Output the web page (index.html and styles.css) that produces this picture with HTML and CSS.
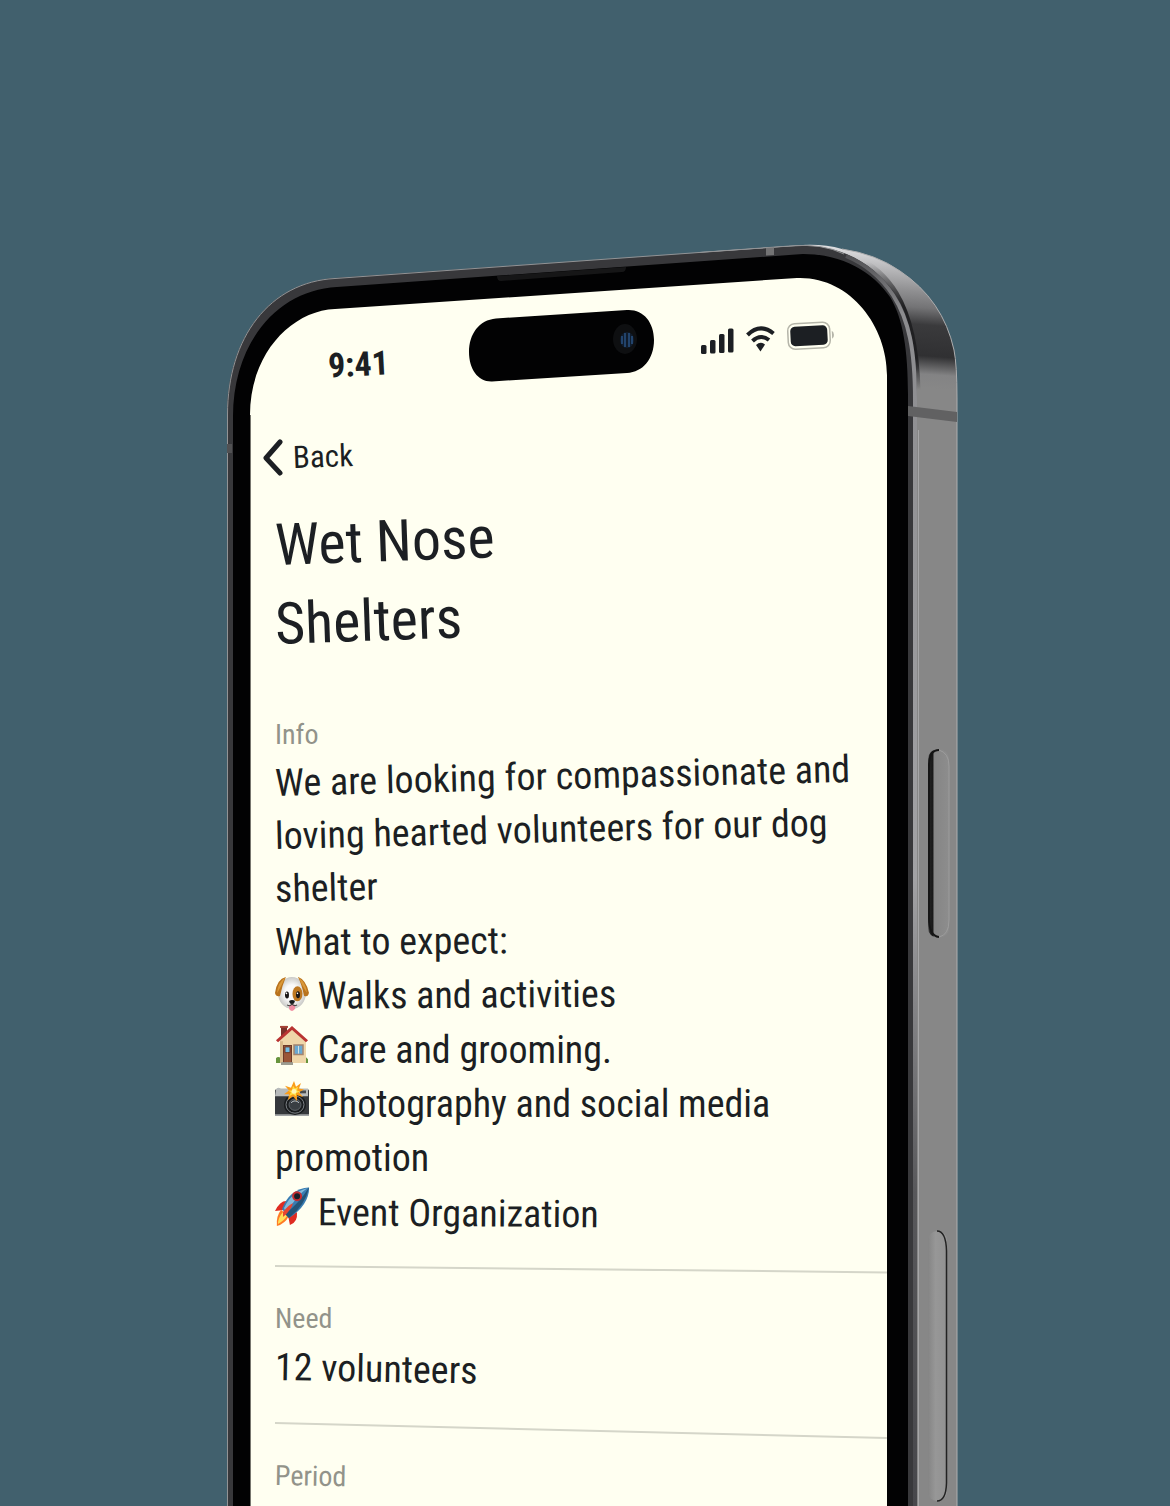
FILE: index.html
```html
<!DOCTYPE html>
<html lang="en">
<head>
<meta charset="utf-8">
<meta name="viewport" content="width=device-width, initial-scale=1">
<title>Wet Nose Shelters</title>
<link rel="stylesheet" href="styles.css">
</head>
<body>
<main class="phone">
  <svg class="frame" viewBox="227 240 731 1266" aria-hidden="true">
    <defs>
      <linearGradient id="side" gradientUnits="userSpaceOnUse" x1="890" y1="245" x2="880" y2="385">
        <stop offset="0" stop-color="#ececee"/><stop offset=".12" stop-color="#c6c6c8"/>
        <stop offset=".32" stop-color="#8e8e90"/><stop offset=".43" stop-color="#737375"/>
        <stop offset=".55" stop-color="#3a3a3c"/><stop offset=".77" stop-color="#303032"/>
        <stop offset=".9" stop-color="#838384"/><stop offset="1" stop-color="#878787"/>
      </linearGradient>
      <linearGradient id="lip" gradientUnits="userSpaceOnUse" x1="0" y1="250" x2="0" y2="1506">
        <stop offset="0" stop-color="#4b4b4e"/><stop offset=".05" stop-color="#8c8c8f"/>
        <stop offset=".5" stop-color="#a2a2a5"/><stop offset=".75" stop-color="#58585b"/><stop offset="1" stop-color="#47474b"/>
      </linearGradient>
      <linearGradient id="shade" gradientUnits="userSpaceOnUse" x1="0" y1="262" x2="0" y2="390">
        <stop offset="0" stop-color="#202022" stop-opacity="0"/><stop offset=".35" stop-color="#202022"/>
        <stop offset=".75" stop-color="#202022"/><stop offset="1" stop-color="#202022" stop-opacity="0"/>
      </linearGradient>
      <linearGradient id="keyEdge" x1="0" y1="0" x2="1" y2="0">
        <stop offset="0" stop-color="#606060"/><stop offset=".1" stop-color="#202020"/><stop offset=".22" stop-color="#191919"/>
        <stop offset=".3" stop-color="#858585"/><stop offset="1" stop-color="#8d8d8d"/>
      </linearGradient>
      <linearGradient id="keyFace" x1="0" y1="0" x2="1" y2="0">
        <stop offset="0" stop-color="#858585"/><stop offset=".4" stop-color="#979797"/><stop offset="1" stop-color="#919191"/>
      </linearGradient>
    </defs>
    <path fill="url(#side)" d="M700 252L803 245Q824 244 842 249Q876 254 900 271Q943 300 954 350Q957 365 957 398V1506H700Z"/>
    <path fill="none" stroke="#adadae" d="M842 249Q876 254 900 271Q943 300 954 350Q957 365 957 398V1506"/>
    <path fill="none" stroke="url(#shade)" stroke-width="5" d="M850 254C874 264 888 280 896 293C911 318 917 350 918 390"/>
    <path fill="#38383b" d="M227 1506V415C227 337 270 282 335 278L803 245.500C848 246 876 268 894 292C911 318 917 350 917 400V1506Z"/>
    <path fill="none" stroke="#929395" d="M227.500 1506V415C227.500 337 270 282 335 278.500L790 246Q822 243 844 254"/>
    <path fill="none" stroke="url(#lip)" stroke-width="4" d="M846 256C870 266 883 280 893 295C909 320 915 350 915 400V1506"/>
    <path fill="none" stroke="#a6a6a8" d="M918.500 430V1506"/>
    <path fill="#020203" d="M233 1506V417C233 342 278 290 337 287L803 254C843 254 873 272 890 297C903 318 908 350 908 395V1506Z"/>
    <path fill="#fffff1" d="M250 1506V415C250 354 291 311 335 309L797 278C850 276 887 326 887 375V1506Z"/>
    <path fill="none" stroke="#77766f" d="M250.500 1506V415"/>
    <path fill="#161617" d="M497 276L626 267Q626 272 622 272L501 281Q497 281 497 276Z"/>
    <path fill="#737374" d="M766 248L774 247.500V255L766 255.500Z"/>
    <path fill="#616162" d="M908 406L957 412V422L908 416Z"/>
    <path fill="#515153" d="M227 444H232V453H227Z"/>
    <path fill="#020203" d="M496 318.500L627 310C643 309 654 322 654 340C654 359 643 372 627 373L492 381.500C478 382 469 369 469 352C469 334 479 320 496 318.500Z"/>
    <ellipse cx="625" cy="339" rx="12" ry="15" fill="#0e0f11"/>
    <ellipse cx="627" cy="340" rx="7" ry="8" fill="#101c2c"/>
    <path stroke="#285080" stroke-width="1.500" fill="none" d="M622 336V344M625 333V347M629 333V347M632 336V344"/>
    <rect x="928" y="749" width="21" height="189" rx="10" fill="url(#keyEdge)"/>
    <path fill="none" stroke="#151515" stroke-width="2" d="M939 750Q929 750 929 766V918Q929 936 939 937"/>
    <path fill="none" stroke="#9d9d9d" d="M939 750Q949 753 949 766V920Q949 935 939 937"/>
    <rect x="928" y="1231" width="19" height="270" rx="9" fill="url(#keyFace)"/>
    <path fill="none" stroke="#222" stroke-width="1.500" d="M937 1231Q946 1231 946.500 1251V1483Q946 1501 937 1501"/>
  </svg>

  <div class="screen">
    <header class="status">
      <span class="time">9:41</span>
      <svg class="indicators" viewBox="700 318 136 40" role="img" aria-label="Signal, Wi-Fi and battery">
        <g fill="#1c1f23">
          <rect x="701" y="345" width="5.500" height="9" rx="1.500"/>
          <rect x="710" y="340" width="5.500" height="13.500" rx="1.500"/>
          <rect x="719" y="334" width="5.500" height="19" rx="1.500"/>
          <rect x="728" y="328.500" width="5.500" height="24" rx="1.500"/>
          <path d="M756 345Q760.500 341 765 344.500L760.500 351.500Z"/>
        </g>
        <g fill="none" stroke="#1c1f23" stroke-width="4">
          <path d="M747.500 335Q760 322.500 773.500 333.500"/><path d="M752.500 341Q760.500 333.500 769 340"/>
        </g>
        <g transform="rotate(-3 809 336)">
          <rect x="788" y="323" width="42" height="25.500" rx="7" fill="none" stroke="#b5b5a9" stroke-width="1.500"/>
          <rect x="790.500" y="326" width="37" height="19.500" rx="4.500" fill="#1c1f23"/>
          <path fill="#b5b5a9" d="M832 332Q834 333 834 336Q834 339 832 340Z"/>
        </g>
      </svg>
    </header>

    <nav class="nav">
      <a class="back" href="#">
        <svg class="chevron" viewBox="0 0 20 38" aria-hidden="true"><path d="M17 4L3 20L17 35" fill="none" stroke="#1c1f23" stroke-width="5" stroke-linecap="round" stroke-linejoin="round"/></svg>
        <span class="back-label">Back</span>
      </a>
    </nav>

    <h1 class="title"><span class="line tilt-up-2">Wet Nose</span><span class="line tilt-up-2">Shelters</span></h1>

    <section class="section info">
      <h2 class="label">Info</h2>
      <p class="copy"><span class="line tilt-up-1">We are looking for compassionate and</span><span class="line tilt-up-1">loving hearted volunteers for our dog</span><span class="line tilt-up-1">shelter</span></p>
      <p class="copy tilt-up">What to expect:</p>
      <ul class="list">
        <li class="item tilt-up">
          <svg class="emoji emoji-low" viewBox="0 0 34 36" role="img" aria-label="Dog">
            <defs><radialGradient id="fur"><stop offset=".5" stop-color="#fafafa"/><stop offset="1" stop-color="#c9c9c6"/></radialGradient></defs>
            <ellipse cx="17" cy="17" rx="14" ry="16" fill="url(#fur)"/>
            <path fill="#b9731d" d="M11 1Q2 3 0 17Q1 21 5 20Q7 10 11 1ZM23 1Q31 4 34 17Q33 22 29 20Q27 9 23 1Z"/>
            <path fill="#da9838" d="M10 2Q3 6 2 17Q5 13 10 2ZM24 2Q31 7 32 17Q28 12 24 2Z"/>
            <ellipse cx="22.500" cy="18" rx="5" ry="7.500" fill="#bd7822"/>
            <ellipse cx="12" cy="19" rx="2" ry="3.500" fill="#191615"/><ellipse cx="23" cy="19" rx="2" ry="3.500" fill="#191615"/>
            <circle cx="11.500" cy="17.500" r=".8" fill="#fff"/><circle cx="22.500" cy="17.500" r=".8" fill="#fff"/>
            <path fill="#f18ca1" d="M14 29H20V33Q17 37 14 33Z"/>
            <path fill="#17191a" d="M14 25Q17 23 20 25Q20 27 17 29Q14 27 14 25Z"/>
            <path fill="none" stroke="#43423f" d="M12 29Q15 31 17 28Q19 31 22 29"/>
          </svg>
          <span>Walks and activities</span>
        </li>
        <li class="item">
          <svg class="emoji emoji-tall" viewBox="0 0 34 42" preserveAspectRatio="none" role="img" aria-label="House">
            <path fill="#67943c" d="M1 40V35Q3 32 6 35V40ZM27 40V35Q30 32 33 36V40Z"/>
            <path fill="#7b302a" d="M6 1H12V16H6Z"/><path fill="#a74437" d="M5 1H13V3H5Z"/>
            <path fill="#efd6a9" d="M5 15L17 4L31 16V40H5Z"/><path fill="#d8b98a" d="M5 17H8V40H5Z"/>
            <path fill="none" stroke="#b93432" stroke-width="3" d="M2 17L17 3L32 17"/>
            <path fill="#6d3a29" d="M8 21H17V40H8Z"/><path fill="#9a5537" d="M9 22H16V39H9Z"/>
            <path fill="#71bde5" stroke="#6d3a29" d="M10 23H15V29H10Z"/>
            <path fill="#6aa9d2" stroke="#a38470" stroke-width="1.500" d="M19 21H28V31H19Z"/>
            <path stroke="#d4e2e4" d="M23.500 22V30"/><path fill="#9c9c91" d="M6 39H18V42H6Z"/>
          </svg>
          <span>Care and grooming.</span>
        </li>
        <li class="item">
          <svg class="emoji" viewBox="0 0 34 38" preserveAspectRatio="none" role="img" aria-label="Camera with flash">
            <rect x="0" y="9" width="34" height="28" rx="1" fill="#35383b"/>
            <path fill="#b8bbbb" d="M1 9Q2 6 6 8H33V16H0Z"/><path fill="#484b4d" d="M25 10H31V13H25Z"/><path fill="#a0a3a4" d="M0 35H34V37H0Z"/>
            <circle cx="20" cy="25" r="11" fill="#191c1e"/><circle cx="20" cy="25" r="9" fill="none" stroke="#808488"/>
            <circle cx="20" cy="25" r="6" fill="#393e43" stroke="#60656a"/><path fill="none" stroke="#bac0c3" d="M16 23Q20 19 24 23"/>
            <path fill="#fa9d19" d="M19 0L21 6L26 2L24 8L29 9L24 12L28 17L22 15L22 21L18 16L13 20L14 14L9 14L14 10L10 5L16 7Z"/>
            <path fill="#ffdf45" d="M18 5L20 8L23 6L22 10L25 11L21 13L21 16L18 14L14 16L16 12L13 10L17 10Z"/><circle cx="19" cy="11" r="2.500" fill="#fff5b7"/>
          </svg>
          <span>Photography and social media promotion</span>
        </li>
        <li class="item tilt-down">
          <svg class="emoji emoji-tall" viewBox="0 0 34 40" role="img" aria-label="Rocket">
            <path fill="#df2c22" d="M11 14Q5 14 0 24L9 23ZM22 25Q23 35 15 38L13 28Z"/>
            <path fill="#ff7b25" d="M6 23Q1 29 2 39Q10 37 14 29Z"/><path fill="#ffe05a" d="M8 25Q3 31 3 37Q9 34 12 29Z"/>
            <path fill="#397cb1" d="M7 22Q14 2 34 0Q34 18 14 31Z"/><path fill="#83b9db" d="M9 21Q16 5 32 1Q22 8 11 26Z"/>
            <path fill="#235377" d="M14 31Q30 18 34 0Q24 16 10 27Z"/><circle cx="22" cy="9" r="5" fill="#c32c30"/><circle cx="22" cy="9" r="3" fill="#171d28"/>
            <path fill="#e94430" d="M8 25Q14 17 18 16Q16 23 8 30Z"/>
          </svg>
          <span>Event Organization</span>
        </li>
      </ul>
    </section>

    <hr class="rule rule-near">
    <section class="section">
      <h2 class="label">Need</h2>
      <p class="copy tilt-down-1">12 volunteers</p>
    </section>
    <hr class="rule rule-far">
    <section class="section">
      <h2 class="label tilt-down-1">Period</h2>
    </section>
  </div>
</main>
</body>
</html>
```
FILE: styles.css
```css
* { box-sizing: border-box; }

body {
  min-height: 100vh;
  margin: 0;
  padding: 240px 0 0 15px;
  background: #41606d;
  color: #1c1f23;
  font-family: "Roboto Condensed", Roboto, sans-serif;
}

h1, h2, p, ul { margin: 0; padding: 0; font-weight: 400; }

.phone {
  display: grid;
  width: 100%;
  max-width: 731px;
  margin: 0 auto;
}

/* The device body and the screen share one grid cell. */
.frame, .screen { grid-area: 1 / 1; }
.frame { display: block; width: 100%; }
.screen { padding: 78px 71px 0 48px; }

.status {
  display: flex;
  justify-content: space-between;
  margin: 0 51px 0 53px;
}
.time {
  margin-top: 24px;
  font-size: 34px;
  font-weight: 700;
  line-height: 44px;
  transform: rotate(-3deg);
}
.indicators { width: 136px; height: 40px; }

.nav { margin: 52px 0 0 -12px; }
.back {
  display: inline-flex;
  align-items: center;
  gap: 10px;
  color: inherit;
  text-decoration: none;
}
.chevron { width: 20px; height: 38px; }
.back-label {
  font-size: 31px;
  line-height: 38px;
  transform: rotate(-2deg);
}

.line { display: block; }
.tilt-up-2, .tilt-up-1, .tilt-up, .tilt-down, .tilt-down-1 { transform-origin: left center; }
.tilt-up-2 { transform: rotate(-2deg); }
.tilt-up-1 { transform: rotate(-1.4deg); }
.tilt-up { transform: rotate(-0.4deg); }
.tilt-down { transform: rotate(0.4deg); }
.tilt-down-1 { transform: rotate(1deg); }

.title {
  margin-top: 26px;
  font-size: 58px;
  line-height: 79px;
}

.info { margin-top: 53px; }
.label {
  margin-bottom: 4px;
  color: #92938a;
  font-size: 28px;
  line-height: 36px;
}
.copy, .list {
  font-size: 38px;
  line-height: 53px;
}
.list { line-height: 54px; list-style: none; }
.emoji {
  width: 34px;
  height: 36px;
  vertical-align: 0;
}
.emoji-low { vertical-align: -3px; }
.emoji-tall { height: 40px; vertical-align: -2px; }

.rule {
  height: 2px;
  margin: 0;
  border: 0;
  background: #d5d6c9;
  transform-origin: left center;
}
.rule-near { margin-top: 26px; transform: rotate(0.6deg); }
.rule-far { margin-top: 28px; transform: rotate(1.4deg); }
.rule + .section { padding-top: 34px; }
```
